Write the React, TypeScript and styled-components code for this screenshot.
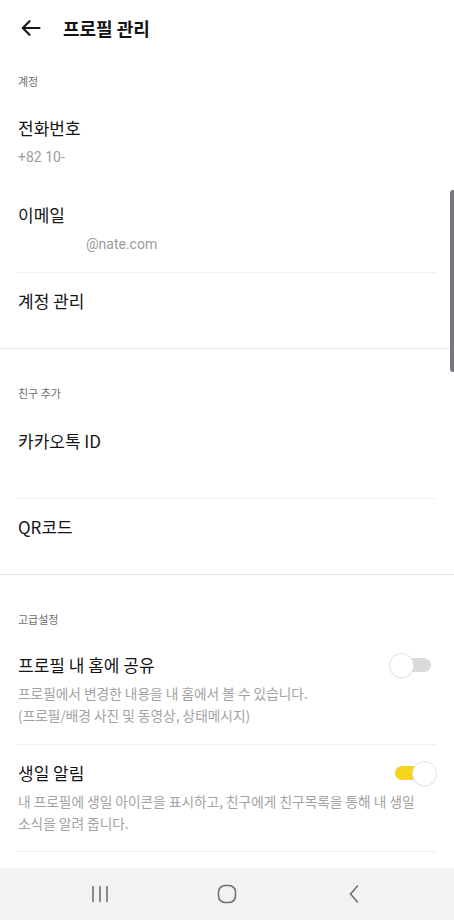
import React from "react";
import styled, { createGlobalStyle } from "styled-components";

const GlobalStyle = createGlobalStyle`
  html, body { margin: 0; padding: 0; background: #ffffff; }
  body {
    font-family: Roboto, "Noto Sans CJK KR", "Noto Sans", sans-serif;
    -webkit-font-smoothing: antialiased;
  }
  * { box-sizing: border-box; }
`;

const Screen = styled.div`
  position: relative;
  width: 454px;
  height: 920px;
  display: flex;
  flex-direction: column;
  overflow: hidden;
  background: #ffffff;
`;

const Header = styled.header`
  height: 56px;
  display: flex;
  align-items: center;
  padding-left: 19px;
  gap: 20px;
  flex-shrink: 0;
`;

const BackButton = styled.button`
  width: 24px;
  height: 24px;
  padding: 0;
  border: 0;
  background: none;
  display: flex;
  color: #161616;
`;

const Title = styled.h1`
  margin: 0;
  font-family: "Noto Sans CJK KR", sans-serif;
  font-size: 18px;
  font-weight: 700;
  line-height: 24px;
  color: #141414;
`;

const Content = styled.main`
  flex: 1;
  display: flex;
  flex-direction: column;
`;

const Section = styled.section<{ $first?: boolean }>`
  padding-top: ${(p) => (p.$first ? 16 : 35)}px;
  display: flex;
  flex-direction: column;
`;

const SectionLabel = styled.div`
  padding: 0 18px;
  font-family: "Noto Sans CJK KR", sans-serif;
  font-size: 11px;
  line-height: 18px;
  color: #6e6e6e;
`;

const Item = styled.div<{ $pt: number; $pb: number }>`
  padding: ${(p) => p.$pt}px 18px ${(p) => p.$pb}px;
  display: flex;
  flex-direction: column;
`;

const ItemHead = styled.div`
  height: 24px;
  display: flex;
  align-items: center;
  justify-content: space-between;
`;

const ItemTitle = styled.div`
  font-family: "Noto Sans CJK KR", sans-serif;
  font-size: 17px;
  line-height: 24px;
  color: #151515;
`;

const ItemSub = styled.div`
  margin-top: 7px;
  min-height: 20px;
  font-family: Roboto, "Noto Sans CJK KR", sans-serif;
  font-size: 14px;
  line-height: 20px;
  color: #9b9b9b;
`;

const Redacted = styled.span`
  display: inline-block;
  width: 68px;
`;

const ItemDesc = styled.div`
  margin-top: 5px;
  font-family: "Noto Sans CJK KR", sans-serif;
  font-size: 13.7px;
  line-height: 22px;
  color: #a2a2a2;
`;

const Divider = styled.div<{ $full?: boolean }>`
  height: 1px;
  flex-shrink: 0;
  margin: ${(p) => (p.$full ? "0" : "0 18px 0 16px")};
  background: ${(p) => (p.$full ? "#e8e8e8" : "#f1f1f1")};
`;

const ToggleWrap = styled.div`
  position: relative;
  width: 46px;
  height: 23px;
  flex-shrink: 0;
`;

const Track = styled.div<{ $on: boolean }>`
  position: absolute;
  top: 4.5px;
  left: 5px;
  right: 5px;
  height: 14px;
  border-radius: 7px;
  background: ${(p) => (p.$on ? "#f6d31c" : "#dadada")};
`;

const Knob = styled.div<{ $on: boolean }>`
  position: absolute;
  top: 0;
  left: ${(p) => (p.$on ? 23 : 0)}px;
  width: 23px;
  height: 23px;
  border-radius: 50%;
  background: #ffffff;
  box-shadow: 0 0 0 1px #e3e3e3, 0 1px 2px rgba(0, 0, 0, 0.1);
`;

const Toggle = ({ on }: { on: boolean }) => (
  <ToggleWrap>
    <Track $on={on} />
    <Knob $on={on} />
  </ToggleWrap>
);

const NavBar = styled.nav`
  height: 52px;
  flex-shrink: 0;
  background: #f2f2f2;
  display: grid;
  grid-template-columns: repeat(3, 1fr);
  padding: 0 36.5px;
  align-items: center;
  justify-items: center;
`;

const NavIcon = styled.svg`
  display: block;
  stroke: #707070;
  fill: none;
  stroke-width: 1.6;
  stroke-linecap: round;
  stroke-linejoin: round;
`;

const ScrollThumb = styled.div`
  position: absolute;
  right: 0;
  top: 190px;
  width: 4px;
  height: 182px;
  border-radius: 3px 0 0 3px;
  background: #77777d;
`;

export default function App() {
  return (
    <Screen>
      <GlobalStyle />
      <Header>
        <BackButton aria-label="뒤로">
          <svg width="24" height="24" viewBox="0 0 24 24" fill="none" stroke="currentColor" strokeWidth="2.1" strokeLinecap="round" strokeLinejoin="round">
            <path d="M20.5 12H4" />
            <path d="M10.5 5.2L3.8 12l6.7 6.8" />
          </svg>
        </BackButton>
        <Title>프로필 관리</Title>
      </Header>

      <Content>
        <Section $first>
          <SectionLabel>계정</SectionLabel>
          <Item $pt={26} $pb={10}>
            <ItemHead>
              <ItemTitle>전화번호</ItemTitle>
            </ItemHead>
            <ItemSub>+82 10-</ItemSub>
          </Item>
          <Item $pt={26} $pb={18}>
            <ItemHead>
              <ItemTitle>이메일</ItemTitle>
            </ItemHead>
            <ItemSub>
              <Redacted />@nate.com
            </ItemSub>
          </Item>
          <Divider />
          <Item $pt={16} $pb={35}>
            <ItemHead>
              <ItemTitle>계정 관리</ItemTitle>
            </ItemHead>
          </Item>
        </Section>
        <Divider $full />

        <Section>
          <SectionLabel>친구 추가</SectionLabel>
          <Item $pt={27} $pb={18}>
            <ItemHead>
              <ItemTitle>카카오톡 ID</ItemTitle>
            </ItemHead>
            <ItemSub />
          </Item>
          <Divider />
          <Item $pt={16} $pb={35}>
            <ItemHead>
              <ItemTitle>QR코드</ItemTitle>
            </ItemHead>
          </Item>
        </Section>
        <Divider $full />

        <Section>
          <SectionLabel>고급설정</SectionLabel>
          <Item $pt={25} $pb={18}>
            <ItemHead>
              <ItemTitle>프로필 내 홈에 공유</ItemTitle>
              <Toggle on={false} />
            </ItemHead>
            <ItemDesc>
              프로필에서 변경한 내용을 내 홈에서 볼 수 있습니다.
              <br />
              (프로필/배경 사진 및 동영상, 상태메시지)
            </ItemDesc>
          </Item>
          <Divider />
          <Item $pt={16} $pb={17}>
            <ItemHead>
              <ItemTitle>생일 알림</ItemTitle>
              <Toggle on />
            </ItemHead>
            <ItemDesc>
              내 프로필에 생일 아이콘을 표시하고, 친구에게 친구목록을 통해 내 생일
              <br />
              소식을 알려 줍니다.
            </ItemDesc>
          </Item>
          <Divider />
        </Section>
      </Content>

      <NavBar>
        <NavIcon width="18" height="18" viewBox="0 0 18 18">
          <path d="M2 1.5v15M9 1.5v15M16 1.5v15" />
        </NavIcon>
        <NavIcon width="20" height="20" viewBox="0 0 20 20">
          <rect x="1.5" y="1.5" width="17" height="17" rx="6.5" />
        </NavIcon>
        <NavIcon width="10" height="18" viewBox="0 0 10 18">
          <path d="M8.5 1L1.5 9l7 8" />
        </NavIcon>
      </NavBar>

      <ScrollThumb />
    </Screen>
  );
}
